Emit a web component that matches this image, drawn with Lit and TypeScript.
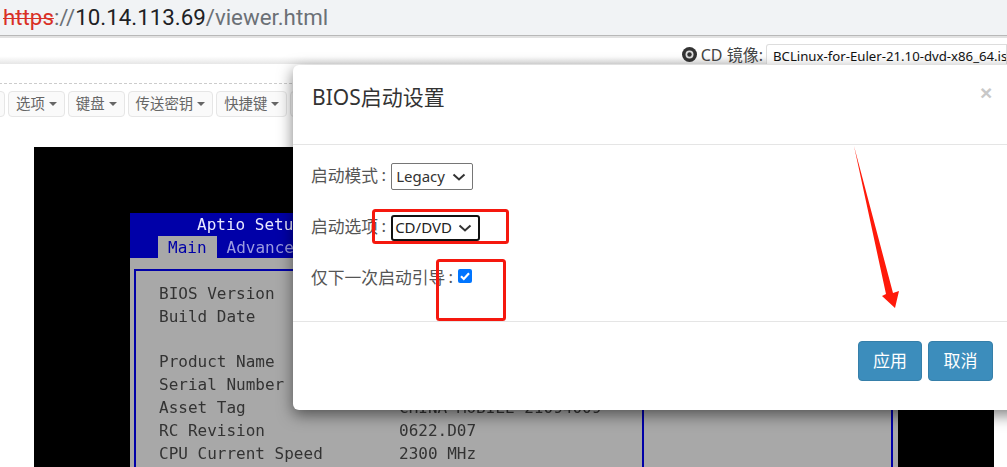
import { LitElement, html, css, svg } from "lit";
import { customElement } from "lit/decorators.js";

@customElement("app-root")
export class AppRoot extends LitElement {
  static styles = css`
    :host { display: block; width: 1007px; height: 467px; overflow: hidden; position: relative; background: #fff; font-family: "Noto Sans", "Noto Sans CJK SC", sans-serif; }
    .urlbar { height: 35px; background: #f1f3f5; border-bottom: 1px solid #b8b8b8; box-shadow: 0 2px 0 #e2e2e2; box-sizing: content-box; padding-left: 3px; font: 22.3px/34px Roboto, "Noto Sans", sans-serif; color: #6b7076; display: flex; position: relative; }
    .urlbar .s { color: #d93025; text-decoration: line-through; text-decoration-thickness: 1px; }
    .urlbar .h { color: #202124; }
    .cdrow { height: 26px; margin-top: 2px; display: flex; justify-content: flex-end; align-items: center; gap: 3px; box-sizing: border-box; padding-top: 6px; background: linear-gradient(#fff 0, #fff 70%, #e6e6e6 100%); font: 16px/20px "Noto Sans", "Noto Sans CJK SC", sans-serif; color: #444; white-space: nowrap; }
    .cdlabel { display: flex; align-items: center; gap: 4px; }
    .cdlabel svg { display: block; }
    .cdtext { padding-top: 2px; }
    .iso { width: 241px; flex: none; height: 20px; border: 1px solid #ddd; border-bottom: none; border-radius: 3px 0 0 0; padding-left: 6px; box-sizing: border-box; font: 13.2px/22px "Noto Sans", sans-serif; color: #111; overflow: hidden; background: #fff; }
    .toolrow { margin-top: 19px; height: 64px; border-top: 1px dashed #ccc; box-sizing: border-box; padding-top: 7px; display: flex; gap: 3px; margin-left: -51px; }
    .tb { height: 26px; box-sizing: border-box; border: 1px solid #e6e6e6; border-radius: 4px; background: #fafafa; font: 14.4px/24px "Noto Sans CJK SC", sans-serif; color: #666; padding: 0 7px 2px; display: flex; align-items: center; gap: 4px; white-space: nowrap; flex: none; }
    .tb.first { width: 56px; }
    .tb i { width: 0; height: 0; margin-top: 2px; border-left: 4px solid transparent; border-right: 4px solid transparent; border-top: 4px solid #666; display: block; }
    .bios { margin-left: 34px; width: 960px; height: 320px; background: #000; box-sizing: border-box; padding: 66px 96px 0 96px; }
    .win { height: 254px; background: #a8a8a8; font: 16px/23px "DejaVu Sans Mono", "Liberation Mono", monospace; color: #333; filter: blur(0.35px); }
    .bluebar { height: 45px; background: #0000a8; color: #e8e8ff; display: flex; flex-direction: column; align-items: flex-start; padding-left: 67px; }
    .title { height: 23px; line-height: 23px; white-space: pre; }
    .tabs { margin-left: -39px; display: flex; height: 22px; align-items: stretch; white-space: pre; }
    .tab { background: #a8a8a8; color: #0000a8; padding: 0 10px; line-height: 24px; height: 23px; }
    .tab2 { color: #9a9ae0; padding-left: 10px; line-height: 24px; }
    .frame { margin: 11px 5px 0 4px; height: 300px; border: 2px solid #0000a8; padding: 11px 0 0 23px; display: grid; grid-template-columns: 240px 243px 1fr; grid-auto-rows: 22.8px; white-space: pre; box-sizing: border-box; }
    .frame .val { grid-column: 2; }
    .frame .l { grid-column: 1; }
    .frame .rule { grid-column: 3; grid-row: 1 / span 20; border-left: 2px solid #0000a8; margin-top: -11px; }
    .overlay { position: absolute; left: 293px; top: 65px; width: 760px; height: 345px; background: #fff; border-radius: 6px; box-shadow: 0 5px 15px rgba(0,0,0,.5); font-family: "Noto Sans", "Noto Sans CJK SC", sans-serif; color: #444; display: flex; flex-direction: column; }
    .dh { height: 80px; border-bottom: 1px solid #e5e5e5; padding: 16px 0 0 19px; box-sizing: border-box; font-size: 21px; line-height: 32px; color: #333; position: relative; flex: none; }
    .x { position: absolute; left: 687px; top: 12px; font: 21px/32px "Liberation Sans", sans-serif; color: #c8c8c8; font-weight: 700; }
    .db { height: 177px; flex: none; border-bottom: 1px solid #e5e5e5; padding: 18px 0 0 18px; box-sizing: border-box; display: flex; flex-direction: column; gap: 24px; }
    .fr { display: flex; align-items: center; font-size: 16.8px; color: #555; height: 27px; flex: none; }
    .lb { display: flex; padding-bottom: 3px; flex: none; }
    .colon { width: 11px; text-align: center; flex: none; }
    .sel { height: 27px; box-sizing: border-box; border: 1px solid #767676; border-radius: 2px; font: 15px/25px "Noto Sans", sans-serif; color: #333; display: flex; align-items: center; padding: 0 6px 0 4px; gap: 7px; flex: none; margin-left: 2px; }
    .sel.focus { border: 2px solid #111; border-radius: 3px; padding: 0 6px 0 2px; color: #222; height: 26px; gap: 6px; }
    .check { width: 14px; height: 14px; background: #0075ff; border-radius: 2px; margin: 4px 0 0 2px; align-self: flex-start; display: block; flex: none; }
    .df { display: flex; gap: 6px; padding: 19px 0 0 565px; }
    .btn { height: 40px; width: 64px; background: #3c8dbc; border: 1px solid #367fa9; border-radius: 4px; color: #fff; font: 17px/35px "Noto Sans CJK SC", sans-serif; text-align: center; box-sizing: border-box; }
    .btn.c { width: 65px; }
    .ink { position: absolute; left: 0; top: 0; pointer-events: none; }
  `;

  render() {
    const rows: [string, string][] = [
      ["BIOS Version", ""], ["Build Date", ""], ["", ""], ["Product Name", ""], ["Serial Number", ""],
      ["Asset Tag", "CHINA MOBILE 21094009"], ["RC Revision", "0622.D07"], ["CPU Current Speed", "2300 MHz"],
    ];
    const tools = ["", "选项", "键盘", "传送密钥", "快捷键", ""];
    return html`
      <div class="urlbar"><span class="s">https</span><span>://</span><span class="h">10.14.113.69</span><span>/viewer.html</span></div>
      <div class="cdrow">
        <span class="cdlabel">
          <svg width="15" height="15" viewBox="0 0 15 15"><circle cx="7.5" cy="7.5" r="7.5" fill="#333"/><circle cx="7.5" cy="7.5" r="4" fill="#ddd"/><circle cx="7.5" cy="7.5" r="2.2" fill="#333"/></svg>
          <span class="cdtext">CD 镜像:</span>
        </span>
        <div class="iso">BCLinux-for-Euler-21.10-dvd-x86_64.iso</div>
      </div>
      <div class="toolrow">
        ${tools.map((t, i) => html`<div class="tb ${i === 0 ? "first" : ""}">${t}${i === 5 ? "" : html`<i></i>`}</div>`)}
      </div>
      <div class="bios">
        <div class="win">
          <div class="bluebar">
            <div class="title">Aptio Setu</div>
            <div class="tabs"><div class="tab">Main</div><div class="tab2">Advance</div></div>
          </div>
          <div class="frame">
            ${rows.map(([a, b]) => html`<div class="l">${a || " "}</div><div class="val">${b || " "}</div>`)}
            <div class="rule"></div>
          </div>
        </div>
      </div>
      <div class="overlay">
        <div class="dh">BIOS启动设置<span class="x">×</span></div>
        <div class="db">
          <div class="fr"><span class="lb">启动模式<span class="colon">:</span></span><div class="sel">Legacy ${this.chev()}</div></div>
          <div class="fr"><span class="lb">启动选项<span class="colon">:</span></span><div class="sel focus">CD/DVD ${this.chev()}</div></div>
          <div class="fr"><span class="lb">仅下一次启动引导<span class="colon">:</span></span>
            <svg class="check" viewBox="0 0 14 14"><path d="M3 7.2 L5.8 10 L11 4.2" fill="none" stroke="#fff" stroke-width="2.2"/></svg>
          </div>
        </div>
        <div class="df"><div class="btn">应用</div><div class="btn c">取消</div></div>
      </div>
      <svg class="ink" width="1007" height="467" viewBox="0 0 1007 467">
        ${svg`<rect x="373.5" y="210.5" width="134" height="32" rx="2" fill="none" stroke="#f5180e" stroke-width="3"/>
        <rect x="437.5" y="260.5" width="67" height="59" rx="2" fill="none" stroke="#f5180e" stroke-width="3"/>
        <path d="M854 146 L886 294 L882 296 L895 308 L899 291 L893 293 Z" fill="#ff1a0a"/>`}
      </svg>
    `;
  }

  chev() {
    return html`<svg width="14" height="10" viewBox="0 0 14 10"><path d="M1.5 2.5 L7 7.5 L12.5 2.5" fill="none" stroke="#333" stroke-width="2"/></svg>`;
  }
}
